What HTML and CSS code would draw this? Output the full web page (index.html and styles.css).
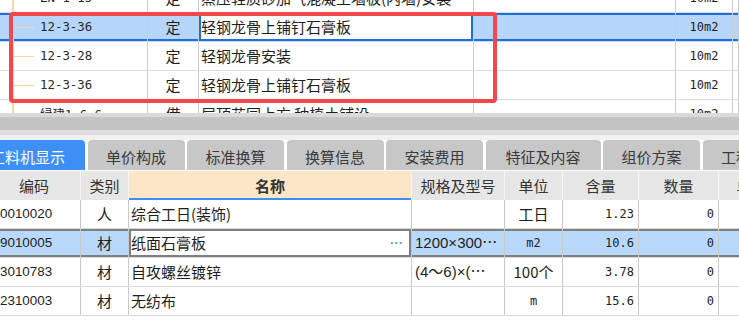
FILE: index.html
```html
<!DOCTYPE html>
<html lang="zh-CN">

<head>
    <meta charset="UTF-8">
    <title>工料机显示</title>
    <link rel="stylesheet" href="styles.css">
</head>

<body>
    <div class="top">
        <div class="tgrid">
            <div class="trow">
                <div class="tcode">ZN-1-15</div>
                <div class="ttype">定</div>
                <div class="tname">蒸压轻质砂加气混凝土墙板(内墙)安装</div>
                <div></div>
                <div class="tunit">10m2</div>
                <div></div>
            </div>
            <div class="trow sel">
                <div class="tcode">12-3-36</div>
                <div class="ttype">定</div>
                <div class="tname edit">轻钢龙骨上铺钉石膏板</div>
                <div></div>
                <div class="tunit">10m2</div>
                <div></div>
            </div>
            <div class="trow">
                <div class="tcode">12-3-28</div>
                <div class="ttype">定</div>
                <div class="tname">轻钢龙骨安装</div>
                <div></div>
                <div class="tunit">10m2</div>
                <div></div>
            </div>
            <div class="trow">
                <div class="tcode">12-3-36</div>
                <div class="ttype">定</div>
                <div class="tname">轻钢龙骨上铺钉石膏板</div>
                <div></div>
                <div class="tunit">10m2</div>
                <div></div>
            </div>
            <div class="trow">
                <div class="tcode"><span class="cjk">绿建</span>1-6-6</div>
                <div class="ttype">借</div>
                <div class="tname">屋顶花园上方 种植土铺设</div>
                <div></div>
                <div class="tunit">10m2</div>
                <div></div>
            </div>
        </div>
        <div class="mark"></div>
    </div>

    <div class="split"></div>

    <div class="tabs">
        <div class="tab wide on">工料机显示</div>
        <div class="tab">单价构成</div>
        <div class="tab">标准换算</div>
        <div class="tab">换算信息</div>
        <div class="tab">安装费用</div>
        <div class="tab wide">特征及内容</div>
        <div class="tab">组价方案</div>
        <div class="tab">工程量明细</div>
    </div>

    <div class="bgrid">
        <div class="brow bhead">
            <div class="bcode">编码</div>
            <div>类别</div>
            <div class="nm">名称</div>
            <div>规格及型号</div>
            <div>单位</div>
            <div>含量</div>
            <div>数量</div>
            <div>单价</div>
        </div>
        <div class="brow">
            <div class="bcode">0010020</div>
            <div class="mid">人</div>
            <div class="bname">综合工日(装饰)</div>
            <div class="spec"></div>
            <div class="mid">工日</div>
            <div class="num">1.23</div>
            <div class="num">0</div>
            <div></div>
        </div>
        <div class="brow sel">
            <div class="bcode">9010005</div>
            <div class="mid">材</div>
            <div class="bname edit">纸面石膏板<span class="dots">···</span></div>
            <div class="spec">1200×300⋯</div>
            <div class="mid mono">m2</div>
            <div class="num">10.6</div>
            <div class="num">0</div>
            <div></div>
        </div>
        <div class="brow">
            <div class="bcode">3010783</div>
            <div class="mid">材</div>
            <div class="bname">自攻螺丝镀锌</div>
            <div class="spec">(4～6)×(⋯</div>
            <div class="mid">100个</div>
            <div class="num">3.78</div>
            <div class="num">0</div>
            <div></div>
        </div>
        <div class="brow">
            <div class="bcode">2310003</div>
            <div class="mid">材</div>
            <div class="bname">无纺布</div>
            <div class="spec"></div>
            <div class="mid mono">m</div>
            <div class="num">15.6</div>
            <div class="num">0</div>
            <div></div>
        </div>
    </div>
</body>

</html>
```

FILE: styles.css
```css
* {
    box-sizing: border-box;
}

body {
    margin: 0;
    width: 739px;
    height: 335px;
    overflow: hidden;
    background: #fff;
    color: #1e1e1e;
    font-family: "Liberation Sans", "Noto Sans CJK SC", sans-serif;
    font-size: 15px;
}

.cjk {
    font-family: "Noto Sans CJK SC", sans-serif;
}

/* upper grid */
.top {
    height: 113px;
    overflow: hidden;
    position: relative;
}

.tgrid {
    margin-top: -16px;
}

.trow {
    display: grid;
    grid-template-columns: 148px 51px 275px 202px 57px 1fr;
    height: 29px;
    border-bottom: 1px solid #dcdcdc;
}

.trow>div {
    border-right: 1px solid #cdcdcd;
    line-height: 28px;
    white-space: nowrap;
    overflow: hidden;
}

.tcode {
    padding-left: 40px;
    font-family: "DejaVu Sans Mono", "Noto Sans CJK SC", monospace;
    font-size: 12.4px;
    color: #2a2a2a;
    background:
        linear-gradient(#fdd6a2, #fdd6a2) 12px 0 / 2px 100% no-repeat,
        linear-gradient(#fdd6a2, #fdd6a2) 14px 50% / 20px 1px no-repeat;
}

.ttype {
    text-align: center;
    font-family: "Noto Sans CJK SC", sans-serif;
}

.tname {
    padding-left: 2px;
    font-family: "Noto Sans CJK SC", sans-serif;
}

.tunit {
    text-align: center;
    font-family: "DejaVu Sans Mono", monospace;
    font-size: 12px;
}

.trow.sel {
    background: #b5d5fb;
    box-shadow: inset 0 2px #1b6fe6, inset 0 -2px #1b6fe6;
}

.trow .edit {
    background: #fff;
    box-shadow: inset 0 0 0 2px #1b6fe6;
}

.mark {
    position: absolute;
    left: 9px;
    top: 12px;
    width: 488px;
    height: 91px;
    border: 4px solid #f4474c;
    border-radius: 4px;
}

/* splitter */
.split {
    height: 27px;
    background: linear-gradient(#dadada 0 4px, #c4c4c4 4px 17px, #dddddd 17px 22px, #f1f1f1 22px);
}

/* tabs */
.tabs {
    display: flex;
    gap: 2.5px;
    margin-left: -30px;
    height: 30px;
}

.tab {
    flex: none;
    padding: 3px 18.5px 0;
    background: #c7c7c7;
    border-radius: 4px 4px 0 0;
    line-height: 27px;
    color: #3a3a3a;
    white-space: nowrap;
    font-family: "Noto Sans CJK SC", sans-serif;
}

.tab.wide {
    padding: 3px 20px 0;
}

.tab.on {
    background: #3d8ff6;
    color: #fff;
}

/* lower grid */
.bgrid {
    margin-top: 1px;
}

.brow {
    display: grid;
    grid-template-columns: 81px 48px 283px 93px 58px 76px 80px 66px;
    height: 29px;
    border-bottom: 1px solid #d8d8d8;
}

.brow>div {
    border-right: 1px solid #c9c9c9;
    line-height: 28px;
    white-space: nowrap;
    overflow: hidden;
    font-family: "Noto Sans CJK SC", sans-serif;
}

.bhead {
    background: #e6e6e6;
    border-bottom: none;
}

.bhead>div {
    border-right-color: #f6f6f6;
    text-align: center;
    color: #333;
    line-height: 29px;
}

.bhead .nm {
    background: #fde6c8;
    font-weight: bold;
    box-shadow: inset 0 -2px #3d8ff6;
}

.brow>.bcode {
    padding-left: 0;
    font-family: "Liberation Sans", sans-serif;
    font-size: 13.4px;
}

.bhead>.bcode {
    padding-right: 12px;
    font-family: "Noto Sans CJK SC", sans-serif;
    font-size: 15px;
}

.mid {
    text-align: center;
}

.brow>.mono {
    font-family: "DejaVu Sans Mono", monospace;
    font-size: 12px;
}

.bname {
    padding-left: 2px;
}

.brow>.spec {
    padding-left: 3px;
    font-family: "Liberation Sans", "Noto Sans CJK SC", sans-serif;
}

.brow>.num {
    text-align: right;
    padding-right: 4px;
    font-family: "DejaVu Sans Mono", monospace;
    font-size: 12px;
}

.brow.sel {
    background: #b9d9fb;
    box-shadow: inset 0 2px #808080, inset 0 -2px #808080;
}

.brow .edit {
    display: flex;
    justify-content: space-between;
    padding-right: 8px;
    background: #fff;
    box-shadow: inset 0 0 0 2px #808080;
}

.dots {
    color: #5a9be0;
    font-family: "Liberation Sans", sans-serif;
    font-size: 13px;
    font-weight: bold;
}
```
